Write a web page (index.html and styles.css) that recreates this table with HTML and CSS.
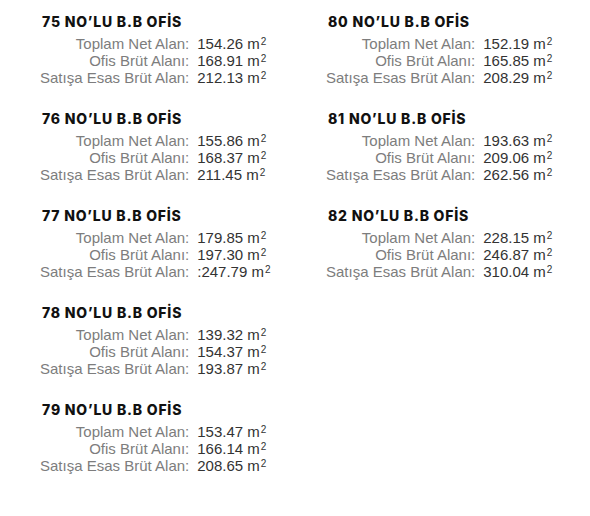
FILE: index.html
```html
<!DOCTYPE html>
<html lang="tr">
<head>
<meta charset="utf-8">
<link rel="stylesheet" href="styles.css">
</head>
<body>
<div class="page">
  <div class="col">
    <section class="unit">
      <h3 class="title">75 NO’LU B.B OFİS</h3>
      <div class="rows">
        <span class="lbl">Toplam Net Alan:</span><span class="val">154.26 m<sup>2</sup></span>
        <span class="lbl">Ofis Brüt Alanı:</span><span class="val">168.91 m<sup>2</sup></span>
        <span class="lbl">Satışa Esas Brüt Alan:</span><span class="val">212.13 m<sup>2</sup></span>
      </div>
    </section>
    <section class="unit">
      <h3 class="title">76 NO’LU B.B OFİS</h3>
      <div class="rows">
        <span class="lbl">Toplam Net Alan:</span><span class="val">155.86 m<sup>2</sup></span>
        <span class="lbl">Ofis Brüt Alanı:</span><span class="val">168.37 m<sup>2</sup></span>
        <span class="lbl">Satışa Esas Brüt Alan:</span><span class="val">211.45 m<sup>2</sup></span>
      </div>
    </section>
    <section class="unit">
      <h3 class="title">77 NO’LU B.B OFİS</h3>
      <div class="rows">
        <span class="lbl">Toplam Net Alan:</span><span class="val">179.85 m<sup>2</sup></span>
        <span class="lbl">Ofis Brüt Alanı:</span><span class="val">197.30 m<sup>2</sup></span>
        <span class="lbl">Satışa Esas Brüt Alan:</span><span class="val">:247.79 m<sup>2</sup></span>
      </div>
    </section>
    <section class="unit">
      <h3 class="title">78 NO’LU B.B OFİS</h3>
      <div class="rows">
        <span class="lbl">Toplam Net Alan:</span><span class="val">139.32 m<sup>2</sup></span>
        <span class="lbl">Ofis Brüt Alanı:</span><span class="val">154.37 m<sup>2</sup></span>
        <span class="lbl">Satışa Esas Brüt Alan:</span><span class="val">193.87 m<sup>2</sup></span>
      </div>
    </section>
    <section class="unit">
      <h3 class="title">79 NO’LU B.B OFİS</h3>
      <div class="rows">
        <span class="lbl">Toplam Net Alan:</span><span class="val">153.47 m<sup>2</sup></span>
        <span class="lbl">Ofis Brüt Alanı:</span><span class="val">166.14 m<sup>2</sup></span>
        <span class="lbl">Satışa Esas Brüt Alan:</span><span class="val">208.65 m<sup>2</sup></span>
      </div>
    </section>
  </div>
  <div class="col">
    <section class="unit">
      <h3 class="title">80 NO’LU B.B OFİS</h3>
      <div class="rows">
        <span class="lbl">Toplam Net Alan:</span><span class="val">152.19 m<sup>2</sup></span>
        <span class="lbl">Ofis Brüt Alanı:</span><span class="val">165.85 m<sup>2</sup></span>
        <span class="lbl">Satışa Esas Brüt Alan:</span><span class="val">208.29 m<sup>2</sup></span>
      </div>
    </section>
    <section class="unit">
      <h3 class="title">81 NO’LU B.B OFİS</h3>
      <div class="rows">
        <span class="lbl">Toplam Net Alan:</span><span class="val">193.63 m<sup>2</sup></span>
        <span class="lbl">Ofis Brüt Alanı:</span><span class="val">209.06 m<sup>2</sup></span>
        <span class="lbl">Satışa Esas Brüt Alan:</span><span class="val">262.56 m<sup>2</sup></span>
      </div>
    </section>
    <section class="unit">
      <h3 class="title">82 NO’LU B.B OFİS</h3>
      <div class="rows">
        <span class="lbl">Toplam Net Alan:</span><span class="val">228.15 m<sup>2</sup></span>
        <span class="lbl">Ofis Brüt Alanı:</span><span class="val">246.87 m<sup>2</sup></span>
        <span class="lbl">Satışa Esas Brüt Alan:</span><span class="val">310.04 m<sup>2</sup></span>
      </div>
    </section>
  </div>
</div>
</body>
</html>
```

FILE: styles.css
```css
html, body {
  margin: 0;
  padding: 0;
  background: #ffffff;
}

.page {
  display: grid;
  grid-template-columns: 286px 260px;
  padding: 13px 0 0 40px;
  font-family: "Liberation Sans", Arial, sans-serif;
}

.col {
  display: flex;
  flex-direction: column;
  gap: 12px;
}

.unit {
  height: 85px;
}

.title {
  margin: 0 0 0 2px;
  font-family: "Inter", "Liberation Sans", sans-serif;
  font-weight: 800;
  font-size: 14px;
  line-height: 18px;
  color: #111111;
  letter-spacing: 0.8px;
}

.rows {
  display: grid;
  grid-template-columns: max-content max-content;
  column-gap: 8px;
  margin-top: 4px;
  font-size: 15px;
  line-height: 17px;
}

.lbl {
  color: #7d7d7d;
  text-align: right;
}

.val {
  color: #333333;
}

.val sup {
  font-size: 10px;
  line-height: 0;
  vertical-align: 4px;
  margin-left: 1px;
}
```
